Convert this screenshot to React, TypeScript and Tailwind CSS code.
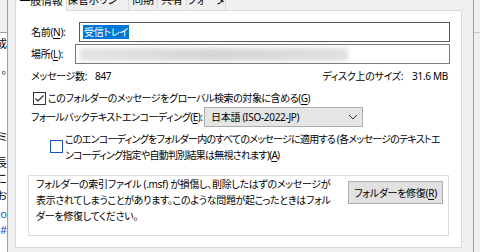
import React from 'react';

const U = ({ children }: { children: React.ReactNode }) => (
  <span className="underline underline-offset-[2px]">{children}</span>
);

const Tab = ({ label, w, active }: { label: string; w: string; active?: boolean }) => (
  <div
    className={`${w} h-[11px] flex items-end justify-center shrink-0 overflow-hidden border-r border-[#d9d9d9] ${
      active ? 'bg-white border-l' : 'border-b bg-[#f0f0f0]'
    }`}
  >
    <span className="leading-[12px] mb-[4px] whitespace-nowrap text-[11px]">{label}</span>
  </div>
);

const Fragment = ({ ch, blue }: { ch: string; blue?: boolean }) => (
  <div className={`h-[12px] flex justify-end items-center whitespace-nowrap leading-[12px] ${blue ? 'text-[#0b5bd3]' : ''}`}>
    {ch}
  </div>
);

export default function App() {
  return (
    <div className="w-[480px] h-[252px] overflow-hidden flex bg-[#f0f0f0] text-[10px] tracking-[-0.3px] leading-[16px] text-black font-['Noto_Sans','Noto_Sans_CJK_JP',sans-serif] [font-feature-settings:'palt']">
      {/* window behind the dialog */}
      <div className="w-[8px] shrink-0 bg-white border-r border-[#a0a0a0] flex flex-col overflow-hidden text-[11px] tracking-normal">
        <div className="h-[33px] shrink-0 bg-[#f0f0f0] border-b border-[#a0a0a0]" />
        <div className="h-[5px] shrink-0" />
        <Fragment ch="成" />
        <div className="h-[14px] shrink-0" />
        <Fragment ch="。" />
        <div className="h-[55px] shrink-0" />
        <Fragment ch="ミ" />
        <div className="h-[14px] shrink-0" />
        <Fragment ch="長" />
        <div className="h-[4px] shrink-0" />
        <Fragment ch="こ" />
        <div className="h-[5px] shrink-0" />
        <Fragment ch="お" />
        <div className="h-[6px] shrink-0" />
        <Fragment ch="o" blue />
        <div className="h-[4px] shrink-0" />
        <Fragment ch="#" blue />
      </div>
      <div className="w-[7px] shrink-0" />

      {/* dialog */}
      <div className="w-[447px] shrink-0 flex flex-col">
        <div className="h-[11px] flex shrink-0">
          <Tab label="一般情報" w="w-[52px]" active />
          <Tab label="保管ポリシー" w="w-[62px]" />
          <Tab label="同期" w="w-[29px]" />
          <Tab label="共有" w="w-[29px]" />
          <Tab label="クォータ" w="w-[39px]" />
          <div className="flex-1 border-b border-[#d9d9d9]" />
        </div>

        <div className="h-[237px] shrink-0 bg-white border border-t-0 border-[#d9d9d9] pl-[15px] pr-[11px] pt-[11px] flex flex-col">
          <div className="h-[20px] flex items-center">
            <span className="w-[48px] shrink-0 whitespace-nowrap">名前(<U>N</U>):</span>
            <div className="flex-1 h-[20px] border border-[#5a5a5a] bg-white flex items-center pl-[3px]">
              <span className="bg-[#0078d7] text-white leading-[14px] px-[1px]">受信トレイ</span>
            </div>
          </div>
          <div className="h-[20px] mt-[2px] flex items-center">
            <span className="w-[44px] shrink-0 whitespace-nowrap">場所(<U>L</U>):</span>
            <div className="flex-1 h-[20px] border border-[#7a7a7a] bg-white flex items-center overflow-hidden">
              <div className="ml-[4px] w-[268px] h-[13px] bg-gradient-to-r from-[#e4e4e4] via-[#d6d6d6] to-[#e0e0e0] blur-[2px]" />
            </div>
          </div>

          <div className="h-[16px] mt-[4px] flex items-center justify-between pr-[2px] whitespace-nowrap">
            <div className="flex">
              <span className="w-[64px] shrink-0">メッセージ数:</span>
              <span>847</span>
            </div>
            <div className="flex gap-[9px]">
              <span>ディスク上のサイズ:</span>
              <span>31.6 MB</span>
            </div>
          </div>

          <div className="h-[16px] mt-[6px] flex items-center">
            <div className="ml-[2px] w-[13px] h-[13px] shrink-0 border border-[#333] bg-white flex items-center justify-center">
              <svg width="11" height="11" viewBox="0 0 11 11">
                <path d="M1.5 5.5 L4 8 L9.5 2.5" fill="none" stroke="#222" strokeWidth="1.1" />
              </svg>
            </div>
            <span className="ml-[2px] whitespace-nowrap tracking-[-0.45px]">このフォルダーのメッセージをグローバル検索の対象に含める(<U>G</U>)</span>
          </div>

          <div className="h-[20px] mt-[1px] flex items-center">
            <span className="w-[173px] shrink-0 whitespace-nowrap tracking-[-0.5px]">フォールバックテキストエンコーディング(<U>E</U>):</span>
            <div className="w-[159px] h-[20px] border border-[#adadad] bg-[#e5e5e5] flex items-center justify-between pl-[6px] pr-[4px]">
              <span className="whitespace-nowrap">日本語 (ISO-2022-JP)</span>
              <svg width="10" height="6" viewBox="0 0 10 6">
                <path d="M1 1 L5 5 L9 1" fill="none" stroke="#333" strokeWidth="1" />
              </svg>
            </div>
          </div>

          <div className="mt-[4px] flex items-start">
            <div className="ml-[19px] mt-[9px] w-[13px] h-[13px] shrink-0 border border-[#1550c0] bg-white" />
            <div className="ml-[2px] flex flex-col whitespace-nowrap tracking-[-0.75px]">
              <span>このエンコーディングをフォルダー内のすべてのメッセージに適用する (各メッセージのテキストエ</span>
              <span>ンコーディング指定や自動判別結果は無視されます)(<U>A</U>)</span>
            </div>
          </div>

          <div className="mt-[12px] -ml-[3px] mr-[1px] h-[61px] border border-[#dcdcdc] flex justify-between">
            <div className="pl-[7px] flex flex-col whitespace-nowrap">
              <span>フォルダーの索引ファイル (.msf) が損傷し、削除したはずのメッセージが</span>
              <span>表示されてしまうことがあります。このような問題が起こったときはフォル</span>
              <span>ダーを修復してください。</span>
            </div>
            <div className="mt-[5px] mr-[5px] w-[95px] h-[23px] shrink-0 border border-[#adadad] bg-[#e1e1e1] flex items-center justify-center whitespace-nowrap">
              フォルダーを修復(<U>R</U>)
            </div>
          </div>
        </div>
      </div>

      <div className="w-[11px] shrink-0" />
      <div className="w-[7px] shrink-0 border-l border-[#a0a0a0] flex flex-col">
        <div className="h-[33px] border-b border-[#c8c8c8]" />
      </div>
    </div>
  );
}
